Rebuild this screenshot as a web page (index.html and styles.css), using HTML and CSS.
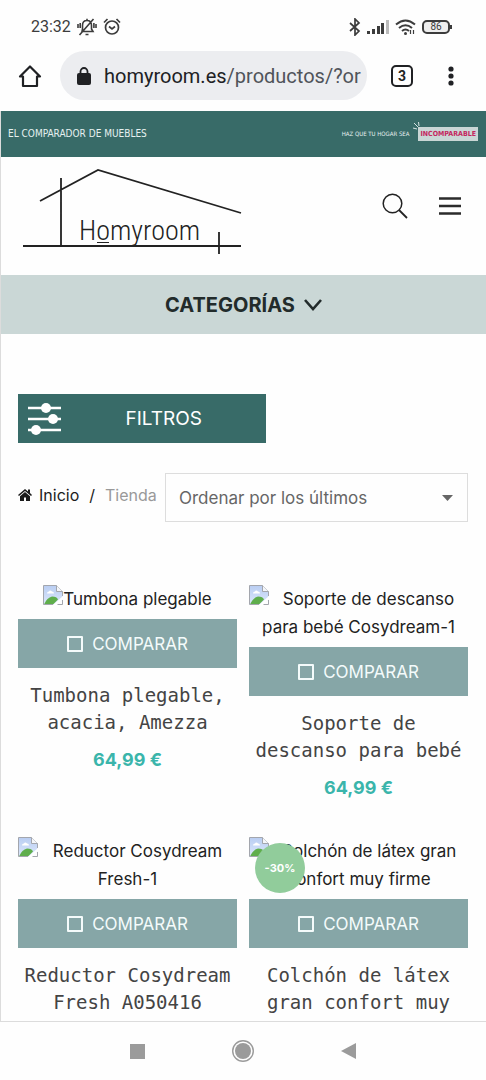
FILE: index.html
```html
<!DOCTYPE html>
<html lang="es">
<head>
<meta charset="utf-8">
<meta name="viewport" content="width=device-width, initial-scale=1">
<title>Homyroom - Tienda</title>
<link rel="stylesheet" href="styles.css">
</head>
<body>
<svg class="defs" aria-hidden="true">
  <linearGradient id="sky" x1="0" y1="0" x2="0" y2="1"><stop offset="0" stop-color="#b9cdf2"/><stop offset="1" stop-color="#dce8fb"/></linearGradient>
  <symbol id="broken" viewBox="0 0 20 20">
    <path d="M.5.5h13l6 6v8l-6 5H.5z" fill="url(#sky)"/>
    <path d="M4 8.500q0-2 2-2 1-2 3 0 2 0 2 2z" fill="#fff"/>
    <path d="M1 19.500q3-7 8-8 5 0 6 3l-5 5z" fill="#5fae4c"/>
    <path d="M10 20 20 11v3l-6 6z" fill="#fff"/>
    <path d="M19.500 11V6.500l-6-6H.5v19H10M14.500 19.500h5V15" fill="none" stroke="#a3a6ad"/>
    <path d="M13.500.5v6h6" fill="#f4f6fa" stroke="#a3a6ad"/>
  </symbol>
</svg>
<div class="screen">
  <div class="status">
    <span class="time">23:32</span>
    <svg width="20" height="18" viewBox="0 0 20 18" fill="none" stroke="#3c3c3c" stroke-width="1.600"><path d="M5 13.500h11l-1.500-2.500V7.500C14.500 4 12.500 2.500 10 2.500S5.500 4 5.500 7.500V11zM10 .8v2M8.500 16.500h3M16.500 1 2.500 17M1 6v4M19 6v4M3.200 5v5M16.900 5v5"/></svg>
    <svg width="18" height="18" viewBox="0 0 18 18" fill="none" stroke="#3c3c3c" stroke-width="1.700"><circle cx="9" cy="9.500" r="6.500"/><path d="m6 8.500 3 2.500 3-2.500M1 4.500 4.500 1M17 4.500 13.500 1"/></svg>
    <span class="push"></span>
    <svg width="12" height="18" viewBox="0 0 12 18" fill="none" stroke="#3c3c3c" stroke-width="1.700"><path d="m1 5 9 8-4 4V1l4 4-9 8"/></svg>
    <svg width="22" height="14" viewBox="0 0 22 14" fill="#3c3c3c"><path d="M0 11h3v3H0zM5 9h3v5H5zM10 6h3v8h-3zM14 3h3v11h-3z"/><path d="M19 0h3v14h-3z" fill="#bbb"/></svg>
    <svg width="21" height="16" viewBox="0 0 21 16" fill="none" stroke="#3c3c3c" stroke-width="2"><path d="M1 5.500q9.500-8 19 0M4 9q6.500-5.500 13 0M7 12q3.500-3 7 0"/><circle cx="10.500" cy="14.500" r="1.500" fill="#3c3c3c" stroke="none"/><path d="M15.500 11v4M18.500 11v4" stroke-width="1.200"/></svg>
    <span class="battery">86</span>
  </div>
  <div class="browser">
    <button class="plain" aria-label="Página principal"><svg width="24" height="24" viewBox="0 0 24 24" fill="none" stroke="#202124" stroke-width="2.200"><path d="M2 12.500h3V22h14v-9.500h3L12 2.500z" stroke-linejoin="round"/></svg></button>
    <a class="url" href="#"><svg width="14" height="18" viewBox="0 0 14 18"><rect y="6" width="14" height="12" rx="2" fill="#202124"/><path d="M3.500 7V4.500a3.500 3.500 0 0 1 7 0V7" fill="none" stroke="#202124" stroke-width="1.800"/></svg><span><b>homyroom.es</b>/productos/?or</span></a>
    <button class="tabs" aria-label="Pestañas">3</button>
    <button class="plain" aria-label="Menú del navegador"><svg width="6" height="20" viewBox="0 0 6 20" fill="#202124"><circle cx="3" cy="3" r="2.600"/><circle cx="3" cy="10" r="2.600"/><circle cx="3" cy="17" r="2.600"/></svg></button>
  </div>
  <main class="page">
    <div class="banner">
      <span class="claim">EL COMPARADOR DE MUEBLES</span>
      <span class="slogan">HAZ QUE TU HOGAR SEA</span>
      <span class="tag">INCOMPARABLE<svg class="rays" width="8" height="8" viewBox="0 0 8 8" stroke="#d5e3e2" fill="none"><path d="m5.500 0 .5 4M1 1l4 4M0 6l4 1"/></svg></span>
    </div>
    <header class="header">
      <a href="#" aria-label="Homyroom">
        <svg width="222" height="90" viewBox="0 0 222 90" fill="none" stroke="#222" stroke-width="1.800"><path d="m18 34 58-31 143 43M39 11v68M1 79h218M197 65v22"/><path d="M75 75.500h12" stroke-width="1"/><text class="wordmark" x="57" y="73">Homyroom</text></svg>
      </a>
      <div class="actions">
        <button class="plain" aria-label="Buscar"><svg width="26" height="26" viewBox="0 0 26 26" fill="none" stroke="#222" stroke-width="1.500"><circle cx="10.500" cy="10.500" r="9.300"/><path d="m17 17 8 8" stroke-width="1.800"/></svg></button>
        <button class="plain" aria-label="Menú"><svg width="22" height="18" viewBox="0 0 22 18" stroke="#2b2b2b" stroke-width="2.400"><path d="M0 1.500h22M0 9h22M0 16.500h22"/></svg></button>
      </div>
    </header>
    <button class="categories">CATEGORÍAS<svg width="18" height="12" viewBox="0 0 18 12" fill="none" stroke="#222b2b" stroke-width="2.600"><path d="m1 1 8 9 8-9"/></svg></button>
    <div class="content">
      <button class="filters"><svg width="34" height="34" viewBox="0 0 34 34" stroke="#fff" stroke-width="2.600" fill="#fff"><path d="M0 6h33M0 17h33M0 28h33"/><g stroke="none"><circle cx="18" cy="6" r="5"/><circle cx="25" cy="17" r="5"/><circle cx="8" cy="28" r="5"/></g></svg><span>FILTROS</span></button>
      <div class="toolbar">
        <nav class="crumbs"><a href="#"><svg width="14" height="12" viewBox="0 0 14 12" fill="#1c1c1c"><path d="M7 0 0 6l1 1 6-5 6 5 1-1-2-2V.5h-2v2zM7 3 2 7.200V12h4V8.500h2V12h4V7.200z"/></svg>Inicio</a><span>/</span><span class="current">Tienda</span></nav>
        <div class="sort">
          <select aria-label="Ordenar productos"><option>Ordenar por los últimos</option></select>
          <svg class="caret" width="11" height="6" viewBox="0 0 11 6" fill="#666"><path d="M0 0h11L5.500 6z"/></svg>
        </div>
      </div>
      <div class="grid">
        <article class="card">
          <a class="picture" href="#"><svg class="missing" width="20" height="20"><use href="#broken"/></svg>Tumbona plegable</a>
          <label class="compare"><input type="checkbox">COMPARAR</label>
          <h2>Tumbona plegable, acacia, Amezza</h2>
          <p class="price">64,99 €</p>
        </article>
        <article class="card">
          <a class="picture" href="#"><svg class="missing" width="20" height="20"><use href="#broken"/></svg>Soporte de descanso para bebé Cosydream-1</a>
          <label class="compare"><input type="checkbox">COMPARAR</label>
          <h2>Soporte de descanso para bebé</h2>
          <p class="price">64,99 €</p>
        </article>
        <article class="card">
          <a class="picture" href="#"><svg class="missing" width="20" height="20"><use href="#broken"/></svg>Reductor Cosydream Fresh-1</a>
          <label class="compare"><input type="checkbox">COMPARAR</label>
          <h2>Reductor Cosydream Fresh A050416</h2>
        </article>
        <article class="card">
          <a class="picture" href="#"><svg class="missing" width="20" height="20"><use href="#broken"/></svg>Colchón de látex gran confort muy firme</a>
          <span class="badge">-30%</span>
          <label class="compare"><input type="checkbox">COMPARAR</label>
          <h2>Colchón de látex gran confort muy</h2>
        </article>
      </div>
    </div>
  </main>
  <nav class="system">
    <button class="plain" aria-label="Recientes"><svg width="24" height="24" viewBox="0 0 24 24" fill="#9b9b9b"><path d="M5 5h15v15H5z"/></svg></button>
    <button class="plain" aria-label="Inicio"><svg width="24" height="24" viewBox="0 0 24 24"><circle cx="12" cy="12" r="10.300" fill="none" stroke="#9b9b9b" stroke-width="1.400"/><circle cx="12" cy="12" r="8" fill="#9b9b9b"/></svg></button>
    <button class="plain" aria-label="Atrás"><svg width="24" height="24" viewBox="0 0 24 24" fill="#9b9b9b"><path d="M19 4v16L4 12z"/></svg></button>
  </nav>
</div>
</body>
</html>
```
FILE: styles.css
```css
* { box-sizing: border-box; }
body {
  margin: 0;
  background: #fefefe;
  color: #222;
  font: 17px/28px Inter, "Liberation Sans", sans-serif;
}
svg { display: block; flex: none; }
button { font: inherit; color: inherit; border: 0; padding: 0; cursor: pointer; }
a { color: inherit; text-decoration: none; }
.defs { position: absolute; width: 0; height: 0; }
.plain { background: none; }
.screen { display: flex; flex-direction: column; height: 100vh; overflow: hidden; }

.status {
  display: flex;
  align-items: center;
  gap: 6px;
  height: 51px;
  flex: none;
  padding: 2px 36px 0 31px;
  font: 16px/20px Roboto, sans-serif;
  color: #3c3c3c;
}
.push { flex: 1; }
.battery {
  position: relative;
  width: 28px;
  border: 2px solid #3c3c3c;
  border-radius: 5px;
  font-size: 10px;
  line-height: 10px;
  text-align: center;
  background: #eee;
}
.battery::after {
  content: "";
  position: absolute;
  right: -4px;
  top: 3px;
  width: 2px;
  height: 4px;
  background: #3c3c3c;
}

.browser {
  display: flex;
  align-items: center;
  flex: none;
  padding: 0 32px 11px 18px;
}
.url {
  flex: 1;
  display: flex;
  align-items: center;
  gap: 13px;
  height: 49px;
  margin: 0 24px 0 18px;
  padding: 0 8px 0 17px;
  overflow: hidden;
  border-radius: 25px;
  background: #ecedf0;
  font: 20px/28px Roboto, sans-serif;
  color: #50545a;
  white-space: nowrap;
}
.url b { font-weight: 400; color: #202124; }
.tabs {
  width: 22px;
  height: 22px;
  margin-right: 35px;
  border: 2px solid #202124;
  border-radius: 5px;
  background: none;
  font: bold 14px/18px Roboto, sans-serif;
}

.page { flex: 1; min-height: 0; overflow: hidden; border-left: 1px solid #dcdcdc; }
.banner {
  display: flex;
  align-items: center;
  height: 46px;
  padding: 0 8px 0 7px;
  background: #386b68;
  color: #e6f1f0;
  font-family: "Liberation Sans Narrow", "DejaVu Sans Condensed", sans-serif;
  line-height: 14px;
}
.claim { flex: 1; font-size: 10px; }
.slogan { font-size: 6px; margin-right: 9px; }
.tag { position: relative; padding: 0 2px; background: #c9d6d5; color: #c4265e; font-size: 7px; font-weight: bold; }
.rays { position: absolute; left: -5px; top: -5px; }

.header {
  display: flex;
  align-items: flex-start;
  justify-content: space-between;
  height: 118px;
  padding: 10px 25px 0 21px;
}
.wordmark { font: 300 28px "Roboto Condensed", Roboto, sans-serif; fill: #222; stroke: none; }
.actions { display: flex; align-items: center; gap: 31px; height: 78px; }
.categories {
  display: flex;
  align-items: center;
  justify-content: center;
  gap: 9px;
  width: 100%;
  height: 59px;
  background: #cad7d6;
  color: #222b2b;
  font-size: 20px;
  font-weight: 700;
}

.content { padding: 60px 18px 0 17px; }
.filters {
  display: flex;
  align-items: center;
  width: 55%;
  height: 49px;
  padding-left: 10px;
  background: #386b68;
  color: #fff;
  font-size: 19px;
}
.filters span { flex: 1; }
.toolbar { display: flex; margin-top: 30px; }
.crumbs {
  display: flex;
  align-items: flex-start;
  gap: 10px;
  width: 147px;
  padding-top: 8px;
  font-size: 16px;
  color: #1c1c1c;
  white-space: nowrap;
}
.crumbs a { display: flex; align-items: center; gap: 7px; }
.current { color: #999; }
.sort { position: relative; flex: 1; }
.sort select {
  appearance: none;
  width: 100%;
  height: 49px;
  padding: 0 40px 0 13px;
  border: 1px solid #ddd;
  border-radius: 0;
  background: #fefefe;
  color: #666;
  font: inherit;
}
.caret { position: absolute; right: 15px; top: 22px; pointer-events: none; }

.grid { display: grid; grid-template-columns: 1fr 1fr; gap: 35px 12px; margin-top: 63px; }
.card { position: relative; text-align: center; min-width: 0; }
.picture { display: block; width: fit-content; margin: 0 auto 6px; }
.missing { float: left; }
.compare {
  display: flex;
  align-items: center;
  justify-content: center;
  gap: 9px;
  height: 49px;
  background: #86a6a7;
  color: #f4fbfb;
}
.compare input {
  appearance: none;
  width: 16px;
  height: 16px;
  margin: 0;
  border: 2px solid #f4fbfb;
  border-radius: 1px;
}
.card h2 {
  margin: 14px 0 0;
  padding: 0 5px;
  font: 400 19px/27px "DejaVu Sans Mono", monospace;
  color: #444;
}
.price { margin: 10px 0 0; color: #3ab5ab; font-size: 18px; font-weight: 700; }
.badge {
  position: absolute;
  left: 6px;
  top: 6px;
  width: 50px;
  height: 50px;
  border-radius: 50%;
  background: #91cc9b;
  color: #fff;
  font-size: 11px;
  font-weight: 700;
  line-height: 50px;
}

.system {
  display: flex;
  align-items: center;
  justify-content: center;
  gap: 82px;
  flex: none;
  height: 59px;
  border-top: 1px solid #dcdcdc;
}
```
